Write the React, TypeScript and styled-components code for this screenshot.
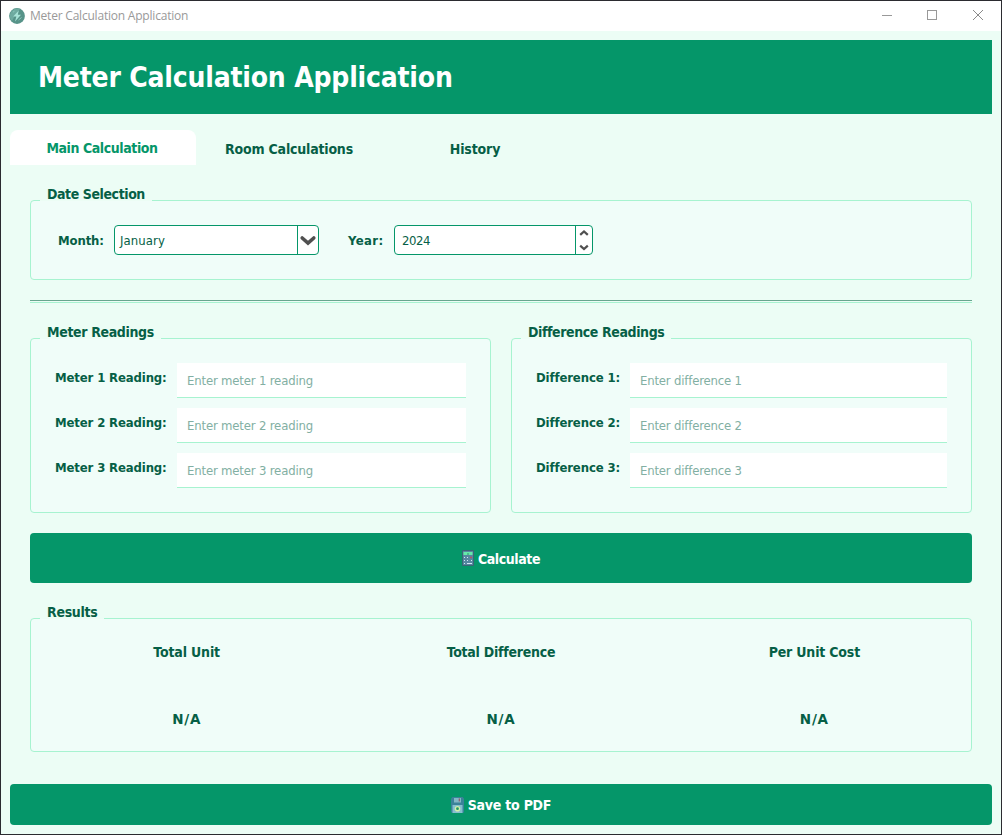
import React from "react";
import styled, { createGlobalStyle } from "styled-components";

const color = {
  primary: "#059669",
  text: "#065f46",
  mint: "#a7f3d0",
  page: "#ecfdf5",
  panel: "#f0fdf9",
  placeholder: "#82afa3",
  chrome: "#999999",
};

const GlobalStyle = createGlobalStyle`
  * { box-sizing: border-box; }
  html, body { margin: 0; padding: 0; }
  body {
    font-family: "DejaVu Sans Condensed", "DejaVu Sans", Tahoma, sans-serif;
    color: ${color.text};
    overflow: hidden;
  }
`;

const Window = styled.div`
  width: 1002px;
  height: 835px;
  display: flex;
  flex-direction: column;
  border: 1px solid #2b2b30;
  background: ${color.page};
`;

const TitleBar = styled.div`
  height: 30px;
  flex: none;
  display: flex;
  align-items: center;
  padding: 0 17px 0 8px;
  background: #fff;
`;

const WindowTitle = styled.span`
  margin-left: 5px;
  flex: 1;
  font: 12px/28px "Open Sans", "Noto Sans", sans-serif;
  letter-spacing: -0.21px;
  color: ${color.chrome};
`;

const WindowControls = styled.div`
  display: flex;
  gap: 34px;
  height: 12px;
  margin-bottom: 2px;
`;

const Content = styled.main`
  flex: 1;
  display: flex;
  flex-direction: column;
  padding: 9px;
`;

const Header = styled.h1`
  margin: 0;
  height: 74px;
  flex: none;
  padding: 0 28px;
  background: ${color.primary};
  color: #fff;
  font-size: 28px;
  font-weight: 700;
  line-height: 76px;
  letter-spacing: -0.2px;
`;

const Tabs = styled.nav`
  display: flex;
  height: 35px;
  margin-top: 16px;
`;

const Tab = styled.button<{ $active?: boolean; $tracking: number }>`
  width: 186px;
  height: 35px;
  padding: ${(p) => (p.$active ? "0 2px 0 0" : "2px 0 0")};
  border: 0;
  border-radius: 8px 8px 0 0;
  background: ${(p) => (p.$active ? "#fff" : "transparent")};
  color: ${(p) => (p.$active ? color.primary : color.text)};
  font: inherit;
  font-size: 14px;
  font-weight: 700;
  letter-spacing: ${(p) => p.$tracking}px;
`;

const Page = styled.div`
  padding: 19px 20px 0;
`;

const Group = styled.section`
  flex: 1;
`;

const GroupTitle = styled.h2<{ $tracking: number }>`
  position: relative;
  width: max-content;
  height: 17px;
  margin: 0 0 -1px 10px;
  padding: 0 7px;
  background: ${color.page};
  font-size: 14px;
  line-height: 20px;
  letter-spacing: ${(p) => p.$tracking}px;
`;

const Panel = styled.div`
  border: 1px solid ${color.mint};
  border-radius: 4px;
  background: ${color.panel};
`;

const DatePanel = styled(Panel)`
  display: flex;
  height: 80px;
  padding: 24px 27px;
`;

const FieldLabel = styled.label<{ $width: number; $tracking: number; $line?: number }>`
  width: ${(p) => p.$width}px;
  margin-right: 10px;
  flex: none;
  font-size: 13px;
  font-weight: 700;
  line-height: ${(p) => p.$line ?? 30}px;
  letter-spacing: ${(p) => p.$tracking}px;
  white-space: nowrap;
`;

const Control = styled.div<{ $width: number; $inset: number; $tracking: number }>`
  display: flex;
  width: ${(p) => p.$width}px;
  height: 30px;
  padding-left: ${(p) => p.$inset}px;
  border: 1px solid ${color.primary};
  border-radius: 4px;
  background: #fff;
  font-size: 13px;
  line-height: 30px;
  letter-spacing: ${(p) => p.$tracking}px;
`;

const ControlValue = styled.span`
  flex: 1;
`;

const ControlButtons = styled.div<{ $width: number }>`
  width: ${(p) => p.$width}px;
  border-left: 1px solid ${color.primary};
`;

const Spacer = styled.div`
  width: 29px;
`;

const Divider = styled.div`
  height: 3px;
  margin: 20px 0 19px;
  border-top: 1px solid #69a58f;
  border-bottom: 1px solid ${color.mint};
`;

const Columns = styled.div`
  display: flex;
  gap: 20px;
`;

const FormPanel = styled(Panel)`
  display: flex;
  flex-direction: column;
  gap: 10px;
  height: 175px;
  padding: 24px;
`;

const FormRow = styled.div`
  display: flex;
  height: 35px;
`;

const TextInput = styled.input<{ $tracking: number }>`
  flex: 1;
  min-width: 0;
  height: 35px;
  padding: 1px 10px 0;
  border: 0;
  border-bottom: 1px solid ${color.mint};
  outline: 0;
  background: #fff;
  font: inherit;
  font-size: 13px;
  letter-spacing: ${(p) => p.$tracking}px;
  &::placeholder {
    color: ${color.placeholder};
    opacity: 1;
  }
`;

const ActionButton = styled.button<{ $height: number; $tracking: number }>`
  display: flex;
  align-items: center;
  justify-content: center;
  gap: 4px;
  width: 100%;
  height: ${(p) => p.$height}px;
  flex: none;
  padding: 0;
  border: 0;
  border-radius: 4px;
  background: ${color.primary};
  color: #fff;
  font: inherit;
  font-size: 14px;
  font-weight: 700;
  letter-spacing: ${(p) => p.$tracking}px;
`;

const ButtonText = styled.span`
  padding-top: 1px;
`;

const CalculateArea = styled.div`
  margin: 20px 0 19px;
`;

const ResultsPanel = styled(Panel)`
  display: grid;
  grid-template-columns: repeat(3, 1fr);
  height: 134px;
  padding-top: 23px;
`;

const Result = styled.div`
  display: flex;
  flex-direction: column;
  align-items: center;
  gap: 47px;
  font-size: 14px;
  font-weight: 700;
  line-height: 20px;
  &:first-child {
    padding-right: 2px;
  }
`;

const ResultName = styled.span<{ $tracking: number }>`
  letter-spacing: ${(p) => p.$tracking}px;
`;

const ResultValue = styled.span`
  font-family: "DejaVu Sans", Tahoma, sans-serif;
  font-size: 13.5px;
  letter-spacing: 0.8px;
`;

const SaveArea = styled.div`
  margin-top: 32px;
`;

const AppIcon = () => (
  <svg width="16" height="16" viewBox="0 0 16 16">
    <circle cx="8" cy="8" r="7.9" fill="#579389" />
    <path d="M1.2 6A7 7 0 0 1 11 1.2L6 7.5 3 13A7 7 0 0 1 1.2 6Z" fill="#6eaaa0" />
    <path d="M9.8 2.6 4.2 8.6h3.2L6 13.4l6-6.6H8.8Z" fill="#a9e3d8" />
    <path d="m9.5 12 3-2.5M4 4.2l1.5-1" stroke="#8cc9bd" strokeWidth="1" />
  </svg>
);

const Minimize = () => (
  <svg width="12" height="12"><path d="M2 6.5h10" stroke={color.chrome} /></svg>
);
const Maximize = () => (
  <svg width="12" height="12"><rect x="1.5" y="1.5" width="9" height="9" fill="none" stroke={color.chrome} /></svg>
);
const Close = () => (
  <svg width="12" height="12"><path d="m1 1 10 10M11 1 1 11" stroke="#8a8a8a" /></svg>
);

const ComboArrow = () => (
  <svg width="20" height="28" viewBox="0 0 20 28">
    <path d="m4.2 12 5.8 5.2 5.8-5.2" fill="none" stroke="#505050" strokeWidth="3.6" strokeLinecap="round" />
  </svg>
);
const SpinArrows = () => (
  <svg width="16" height="28" viewBox="0 0 16 28">
    <path d="M4.2 8.9 8 5.4l3.8 3.5M4.2 19.6 8 23.1l3.8-3.5" fill="none" stroke="#505050" strokeWidth="2.2" />
  </svg>
);

const CalculatorIcon = () => (
  <svg width="12" height="16" viewBox="0 0 12 16">
    <rect width="12" height="16" rx="1" fill="#3b6576" />
    <rect x="1" y="1" width="10" height="14" fill="#5687a0" />
    <rect x="1.5" y="2" width="9" height="3" fill="#64eaaa" />
    <path d="M5 4h2" stroke="#31966c" />
    <path d="M2 7.5h1m2 0h1M2 10.5h1m2 0h1m3 0h1M2 13.5h1" stroke="#d4e8f4" strokeWidth="1" />
    <path d="M5 13.5h5" stroke="#d4e8f4" strokeWidth="1" />
    <path d="M8 7.5h2" stroke="#b35363" strokeWidth="1.4" />
  </svg>
);

const FloppyIcon = () => (
  <svg width="13" height="16" viewBox="0 0 13 16">
    <path d="M0 1.5 1.5 0h10L13 1.5V15l-1 1H1l-1-1Z" fill="#3b8299" />
    <rect x="3" y="1" width="7" height="4.5" fill="#83b7c6" />
    <rect x="7.7" y="1.4" width="1.3" height="3" fill="#8e6272" />
    <rect x="1.5" y="8" width="10" height="8" fill="#86bfcf" />
    <circle cx="6.5" cy="11.7" r="2.1" fill="#239a65" stroke="#d3efaa" strokeWidth="1.4" />
  </svg>
);

interface FormProps {
  title: string;
  titleTracking: number;
  labelWidth: number;
  labelTracking: number;
  inputTracking: number;
  label: (n: number) => string;
  placeholder: (n: number) => string;
}

const ReadingsForm = (p: FormProps) => (
  <Group>
    <GroupTitle $tracking={p.titleTracking}>{p.title}</GroupTitle>
    <FormPanel>
      {[1, 2, 3].map((n) => (
        <FormRow key={n}>
          <FieldLabel $width={p.labelWidth} $tracking={p.labelTracking}>{p.label(n)}</FieldLabel>
          <TextInput placeholder={p.placeholder(n)} $tracking={p.inputTracking} />
        </FormRow>
      ))}
    </FormPanel>
  </Group>
);

const results = [
  { name: "Total Unit", tracking: -0.15 },
  { name: "Total Difference", tracking: -0.25 },
  { name: "Per Unit Cost", tracking: -0.18 },
];

export default function App() {
  return (
    <Window>
      <GlobalStyle />
      <TitleBar>
        <AppIcon />
        <WindowTitle>Meter Calculation Application</WindowTitle>
        <WindowControls>
          <Minimize />
          <Maximize />
          <Close />
        </WindowControls>
      </TitleBar>
      <Content>
        <Header>Meter Calculation Application</Header>
        <Tabs>
          <Tab $active $tracking={-0.42}>Main Calculation</Tab>
          <Tab $tracking={-0.2}>Room Calculations</Tab>
          <Tab $tracking={-0.15}>History</Tab>
        </Tabs>
        <Page>
          <Group>
            <GroupTitle $tracking={-0.42}>Date Selection</GroupTitle>
            <DatePanel>
              <FieldLabel $width={46} $tracking={-0.12} $line={32}>Month:</FieldLabel>
              <Control $width={205} $inset={5} $tracking={0.1}>
                <ControlValue>January</ControlValue>
                <ControlButtons $width={21}><ComboArrow /></ControlButtons>
              </Control>
              <Spacer />
              <FieldLabel $width={36} $tracking={0.4} $line={32}>Year:</FieldLabel>
              <Control $width={199} $inset={7} $tracking={-0.4}>
                <ControlValue>2024</ControlValue>
                <ControlButtons $width={17}><SpinArrows /></ControlButtons>
              </Control>
            </DatePanel>
          </Group>
          <Divider />
          <Columns>
            <ReadingsForm
              title="Meter Readings"
              titleTracking={-0.35}
              labelWidth={112}
              labelTracking={-0.13}
              inputTracking={-0.17}
              label={(n) => `Meter ${n} Reading:`}
              placeholder={(n) => `Enter meter ${n} reading`}
            />
            <ReadingsForm
              title="Difference Readings"
              titleTracking={-0.4}
              labelWidth={84}
              labelTracking={-0.12}
              inputTracking={-0.18}
              label={(n) => `Difference ${n}:`}
              placeholder={(n) => `Enter difference ${n}`}
            />
          </Columns>
          <CalculateArea>
            <ActionButton $height={50} $tracking={-0.42}>
              <CalculatorIcon />
              <ButtonText>Calculate</ButtonText>
            </ActionButton>
          </CalculateArea>
          <Group>
            <GroupTitle $tracking={-0.3}>Results</GroupTitle>
            <ResultsPanel>
              {results.map((r) => (
                <Result key={r.name}>
                  <ResultName $tracking={r.tracking}>{r.name}</ResultName>
                  <ResultValue>N/A</ResultValue>
                </Result>
              ))}
            </ResultsPanel>
          </Group>
        </Page>
        <SaveArea>
          <ActionButton $height={41} $tracking={-0.24}>
            <FloppyIcon />
            Save to PDF
          </ActionButton>
        </SaveArea>
      </Content>
    </Window>
  );
}
